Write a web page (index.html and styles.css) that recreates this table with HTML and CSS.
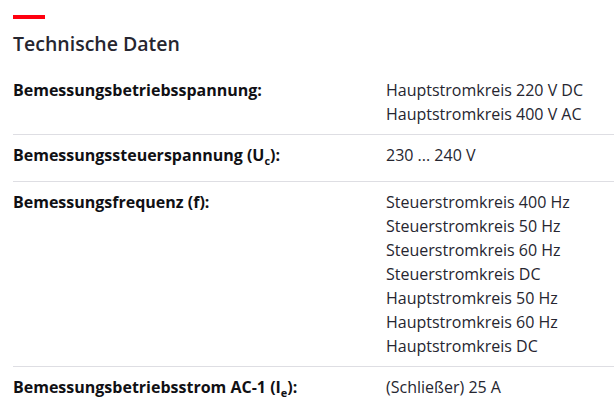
FILE: index.html
```html
<!DOCTYPE html>
<html lang="de">
<head>
<meta charset="utf-8">
<link rel="stylesheet" href="styles.css">
</head>
<body>
<section class="specs">
  <div class="accent"></div>
  <h2 class="title">Technische Daten</h2>
  <div class="table">
    <div class="row">
      <div class="label">Bemessungsbetriebsspannung:</div>
      <div class="values">
        <div>Hauptstromkreis 220 V DC</div>
        <div>Hauptstromkreis 400 V AC</div>
      </div>
    </div>
    <div class="row">
      <div class="label">Bemessungssteuerspannung (U<sub>c</sub>):</div>
      <div class="values">
        <div>230 ... 240 V</div>
      </div>
    </div>
    <div class="row">
      <div class="label">Bemessungsfrequenz (f):</div>
      <div class="values">
        <div>Steuerstromkreis 400 Hz</div>
        <div>Steuerstromkreis 50 Hz</div>
        <div>Steuerstromkreis 60 Hz</div>
        <div>Steuerstromkreis DC</div>
        <div>Hauptstromkreis 50 Hz</div>
        <div>Hauptstromkreis 60 Hz</div>
        <div>Hauptstromkreis DC</div>
      </div>
    </div>
    <div class="row">
      <div class="label">Bemessungsbetriebsstrom AC-1 (I<sub>e</sub>):</div>
      <div class="values">
        <div>(Schließer) 25 A</div>
      </div>
    </div>
  </div>
</section>
</body>
</html>
```
FILE: styles.css
```css
html, body {
  margin: 0;
  padding: 0;
  background: #ffffff;
}
body {
  font-family: "Open Sans", "Noto Sans", sans-serif;
  color: #1f1f24;
  overflow: hidden;
}
.specs {
  padding: 15px 0 0 13px;
}
.accent {
  width: 32px;
  height: 4px;
  background: #ff000f;
}
.title {
  margin: 13px 0 0 0;
  font-size: 19.5px;
  line-height: 24px;
  font-weight: 600;
  color: #262630;
}
.table {
  margin-top: 13px;
}
.row {
  display: grid;
  grid-template-columns: 373px 1fr;
  padding: 9px 0 8px 0;
  font-size: 16px;
  line-height: 24px;
}
.row + .row {
  border-top: 1px solid #dedee3;
  padding-top: 8px;
}
.label {
  font-weight: 700;
  color: #101014;
}
.values {
  color: #262630;
}
sub {
  font-size: 11px;
  line-height: 0;
  vertical-align: -4px;
}
.row:nth-child(2),
.row:nth-child(4) {
  padding-bottom: 14px;
}
```
